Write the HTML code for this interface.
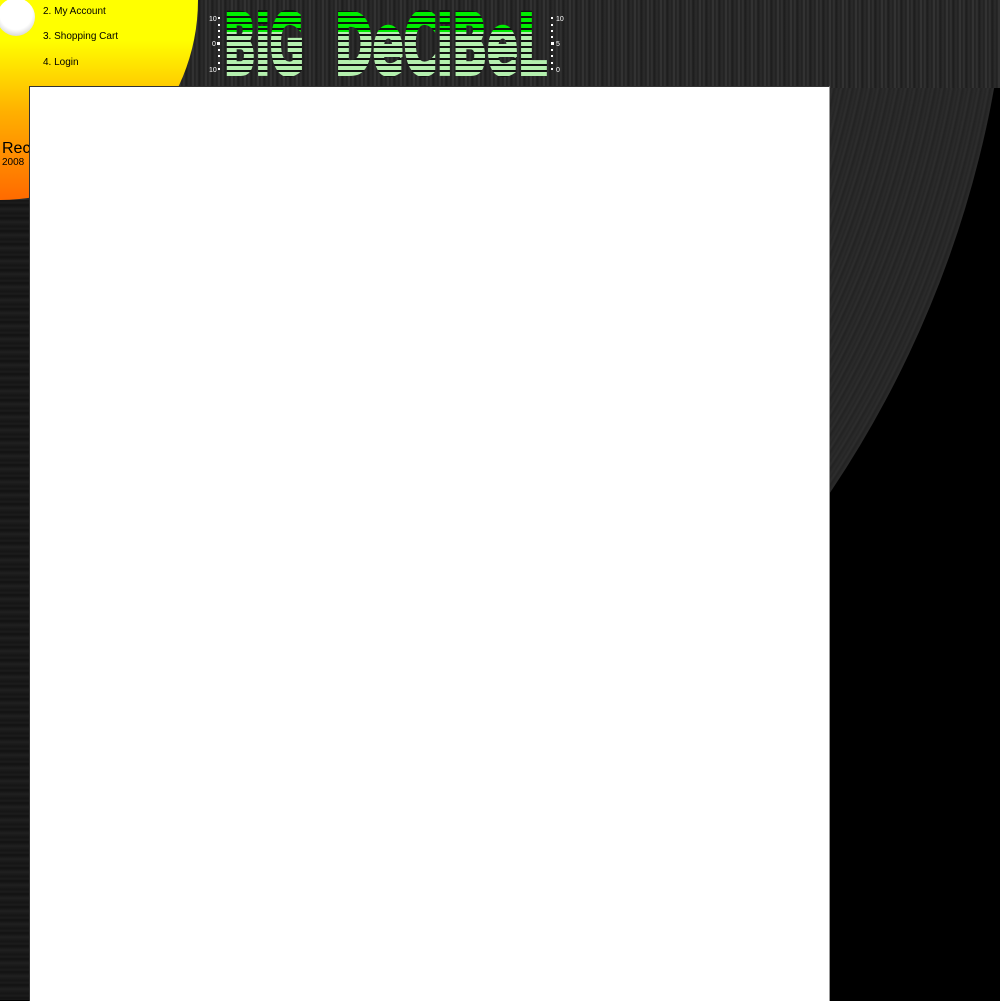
<!DOCTYPE html>
<html><head><meta charset="utf-8"><style>
html,body{margin:0;padding:0;width:1000px;height:1000px;overflow:hidden;background:#000;font-family:"Liberation Sans",sans-serif;}
.abs{position:absolute;}
#left{left:0;top:200px;width:40px;height:800px;background:repeating-linear-gradient(180deg,#151515 0,#1c1c1c 3px,#121212 5px,#202020 9px,#161616 13px);}
#rec{left:-1111px;top:-1161px;width:2122px;height:2122px;border-radius:50%;
background:repeating-radial-gradient(circle at 50% 50%,#262626 0,#2e2e2e 2px,#222 4px,#2b2b2b 7px,#242424 9px);}
#hdr{left:0;top:0;width:1000px;height:88px;background:repeating-linear-gradient(90deg,#222 0,#333 2px,#1c1c1c 4px,#2c2c2c 7px,#202020 9px,#383838 11px,#1e1e1e 13px);}
#label{left:-198px;top:-200px;width:396px;height:400px;border-radius:50%;background:linear-gradient(180deg,#ffff00 0%,#ffff00 60%,#ffb000 78%,#ff6a00 100%);}
#hole{left:-3px;top:-2px;width:38px;height:38px;border-radius:50%;background:radial-gradient(circle at 50% 40%,#fff 0,#fff 55%,#ccc 85%,#999 100%);}
.nav{left:43px;font-size:10px;color:#000;}
#panel{left:29px;top:86px;width:799px;height:914px;background:#fff;border-left:1px solid #333;border-top:1px solid #333;border-right:1px solid #999;}
</style></head><body>
<div class="abs" id="rec"></div>
<div class="abs" id="left"></div>
<div class="abs" id="hdr"></div>
<div class="abs" id="label"></div>
<div class="abs" id="hole"></div>
<div class="abs nav" style="top:6px">2. My Account</div>
<div class="abs nav" style="top:31px">3. Shopping Cart</div>
<div class="abs nav" style="top:57px">4. Login</div>
<div class="abs" style="left:2px;top:140px;font-size:16px;color:#000">Record</div>
<div class="abs" style="left:2px;top:157px;font-size:10px;color:#000">2008</div>
<svg class="abs" style="left:0;top:0" width="600" height="90">
<defs>
<mask id="t" maskUnits="userSpaceOnUse" x="0" y="0" width="600" height="90">
<g font-family="DejaVu Sans" font-weight="bold" font-size="84" fill="#fff" stroke="#fff" stroke-width="4" stroke-linejoin="miter">
<text x="224" y="74" textLength="80" lengthAdjust="spacingAndGlyphs">BiG</text>
<text x="335" y="74" textLength="212" lengthAdjust="spacingAndGlyphs">DeCiBeL</text>
</g>
</mask>
<pattern id="s" width="10" height="6" patternUnits="userSpaceOnUse" y="12"><rect width="10" height="2" y="4" fill="#111"/></pattern>
</defs>
<g mask="url(#t)">
<rect x="215" y="10" width="340" height="22" fill="#00ee00"/>
<rect x="215" y="32" width="340" height="50" fill="#b4f0ae"/>
<rect x="215" y="10" width="340" height="72" fill="url(#s)"/>
</g>
<g fill="#fff" font-family="Liberation Sans" font-size="7">
<text x="209" y="21">10</text><text x="212" y="46">0</text><text x="209" y="72">10</text>
<text x="556" y="21">10</text><text x="556" y="46">5</text><text x="556" y="72">0</text>
<rect x="218" y="17" width="2" height="2"/><rect x="218" y="24" width="2" height="2"/><rect x="218" y="30" width="2" height="2"/><rect x="218" y="36" width="2" height="2"/><rect x="217" y="42" width="3" height="3"/><rect x="218" y="49" width="2" height="2"/><rect x="218" y="55" width="2" height="2"/><rect x="218" y="62" width="2" height="2"/><rect x="218" y="68" width="2" height="2"/>
<rect x="551" y="17" width="2" height="2"/><rect x="551" y="24" width="2" height="2"/><rect x="551" y="30" width="2" height="2"/><rect x="551" y="36" width="2" height="2"/><rect x="551" y="42" width="3" height="3"/><rect x="551" y="49" width="2" height="2"/><rect x="551" y="55" width="2" height="2"/><rect x="551" y="62" width="2" height="2"/><rect x="551" y="68" width="2" height="2"/>
</g>
</svg>
<div class="abs" id="panel"></div>
</body></html>
